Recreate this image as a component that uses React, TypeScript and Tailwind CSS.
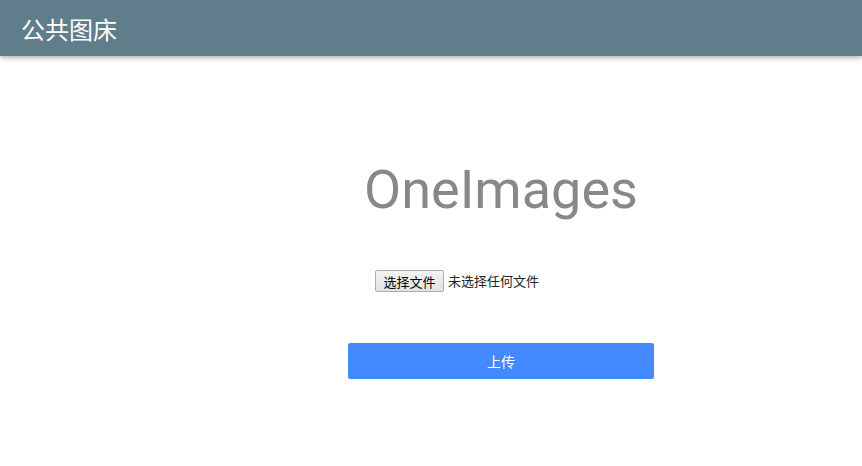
export default function App() {
    return (
        <div className="min-h-[466px] bg-white font-['Roboto','Noto_Sans_CJK_SC',sans-serif]">
            <nav className="h-14 bg-[#607d8b] flex items-center px-[21px] shadow-[0_2px_5px_rgba(0,0,0,0.3)]">
                <span className="text-[24px] text-white font-['Noto_Sans_CJK_SC',sans-serif] leading-none pt-[1px]">
                    公共图床
                </span>
            </nav>

            <div className="pl-[140px] flex flex-col items-center">
                <h2 className="mt-[107px] text-[54px] leading-none text-[#888888] font-normal">
                    OneImages
                </h2>

                <div className="mt-[53px] w-[306px] pl-[27px] flex items-center gap-[4px] font-['Noto_Sans_CJK_SC',sans-serif] text-[13px] text-[#222]">
                    <button className="h-[22px] w-[69px] border border-[#adadad] rounded-[2px] bg-gradient-to-b from-[#f4f4f4] to-[#e2e2e2] leading-none text-black">
                        选择文件
                    </button>
                    <span>未选择任何文件</span>
                </div>

                <button className="mt-[51px] w-[306px] h-9 rounded-[2px] bg-[#448aff] text-white text-sm font-['Noto_Sans_CJK_SC',sans-serif]">
                    上传
                </button>
            </div>
        </div>
    )
}
